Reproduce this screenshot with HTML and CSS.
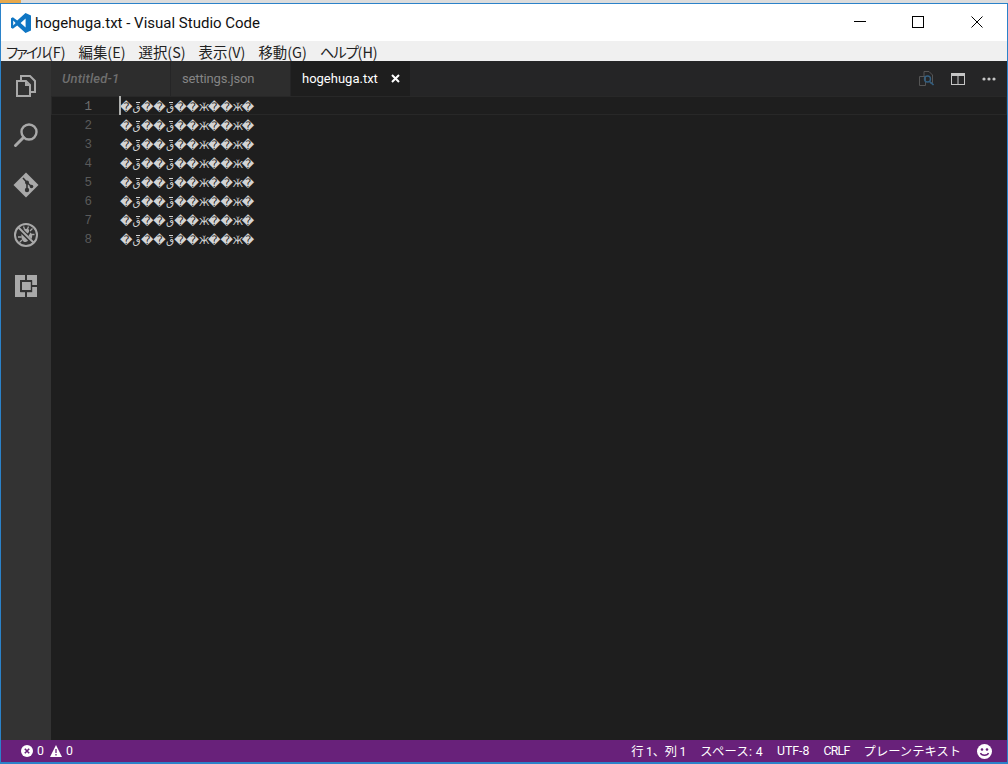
FILE: index.html
```html
<!DOCTYPE html>
<html lang="ja">
<head>
<meta charset="utf-8">
<title>hogehuga.txt - Visual Studio Code</title>
<link rel="stylesheet" href="styles.css">
</head>
<body>
<div class="desktop-strip"><div class="taskbar-accent"></div></div>
<div class="window">
  <header class="titlebar">
    <svg class="logo" width="22" height="22" viewBox="0 0 22 22"><path fill="#0f76c4" d="M15.5 1 21 3.4v15.2L15.5 21 7.2 13.4 2.9 16.8 1 15.8V6.2l1.9-1 4.3 3.4zM15.600 6.600 10.600 11l5 4.400zM3.200 8.600v4.800L5.600 11z"/></svg>
    <span class="title">hogehuga.txt - Visual Studio Code</span>
    <div class="win-controls">
      <span class="win-btn min"><svg width="12" height="12" viewBox="0 0 12 12"><path d="M0 5.500h12" stroke="#000" fill="none"/></svg></span>
      <span class="win-btn"><svg width="12" height="12" viewBox="0 0 12 12"><rect x=".5" y=".5" width="11" height="11" stroke="#000" fill="none"/></svg></span>
      <span class="win-btn"><svg width="12" height="12" viewBox="0 0 12 12"><path d="M.5.5l11 11M11.500.5l-11 11" stroke="#000" fill="none"/></svg></span>
    </div>
  </header>
  <nav class="menubar">
    <span><span class="kana-a">ファイル</span>(F)</span><span>編集(E)</span><span>選択(S)</span><span>表示(V)</span><span>移動(G)</span><span><span class="kana-b">ヘルプ</span>(H)</span>
  </nav>
  <div class="workbench">
    <aside class="activity">
      <svg width="24" height="24" viewBox="0 0 24 24"><g fill="none" stroke="#a9a9a9" stroke-width="2"><path d="M3 7h9l4 4v11H3z"/><path d="M7 6V2h9l5 5v11h-4"/><path d="M12 7v4h4"/></g></svg>
      <svg width="26" height="26" viewBox="0 0 26 26"><circle cx="16" cy="10" r="7.500" fill="none" stroke="#a9a9a9" stroke-width="2.400"/><path d="M10.500 15.500 2.500 23.500" stroke="#a9a9a9" stroke-width="3" stroke-linecap="round"/></svg>
      <svg width="26" height="26" viewBox="0 0 26 26"><path fill="#a9a9a9" d="M13 .5 25.500 13 13 25.500.5 13z"/><path d="M10 6l4 4.500M14 10.500v7M14 10.500l4.500 4" stroke="#333" stroke-width="1.600" fill="none"/><circle cx="14" cy="10.500" r="2" fill="#333"/><circle cx="14" cy="18" r="2.200" fill="#333"/><circle cx="18.500" cy="14.500" r="1.800" fill="#333"/></svg>
      <svg width="26" height="26" viewBox="0 0 26 26"><circle cx="13" cy="13" r="11" fill="none" stroke="#a9a9a9" stroke-width="2"/><path d="M5.500 5.500l15 15" stroke="#a9a9a9" stroke-width="2"/><path fill="#a9a9a9" d="M8.500 12l6.500 6.500c-1 1.500-3 2-4.500 1-1.500-1-2.500-4.500-2-7.500zM10.500 7.500c1.500-1 4-1 5.500 0v2.500l-1.500 1.500zM17.500 10.500l1.500 1.500c.5 1.500.2 3.500-.5 5l-3-3z"/><path d="M19.500 6.500 17 9M21.500 12.500H19M5 15h3.500M6.500 20.500 9 18M10.500 4.500 11.500 7M15.500 4.500 14.500 7" stroke="#a9a9a9" stroke-width="1.300"/></svg>
      <svg class="ext" width="24" height="24" viewBox="0 0 24 24"><path fill="#a9a9a9" fill-rule="evenodd" d="M1 1h10v5H6v12h5v5H1zM13 1h10v10h-5V6h-5zM18 13h5v10H13v-5h5z"/><path fill="#a9a9a9" d="M8 8h10v8H8z"/><rect x="7" y="7" width="10.500" height="10.500" fill="none" stroke="#333" stroke-width="1.400"/></svg>
    </aside>
    <main class="main">
      <div class="tabs">
        <div class="tab italic">Untitled-1</div>
        <div class="tab settings">settings.json</div>
        <div class="tab active">hogehuga.txt<svg class="tab-close" width="9" height="9" viewBox="0 0 9 9"><path d="M1 1l7 7M8 1 1 8" stroke="#fff" stroke-width="2"/></svg></div>
        <div class="tab-actions">
          <svg width="15" height="15" viewBox="0 0 15 15"><g fill="none"><path d="M5 5V.5h5l3.500 3.500v8H11M.5 5.500h6v9h-6z" stroke="#555" stroke-width="1"/><circle cx="8.500" cy="8" r="3" stroke="#335f80" stroke-width="1.400"/><path d="M10.500 10.500l4 3.500" stroke="#335f80" stroke-width="1.600"/></g></svg>
          <svg width="14" height="12" viewBox="0 0 14 12"><path fill="#c5c5c5" fill-rule="evenodd" d="M0 0h14v12H0zM1 3v8h5.500V3zM7.500 3v8H13V3z"/></svg>
          <svg width="14" height="4" viewBox="0 0 14 4"><g fill="#c5c5c5"><circle cx="2" cy="2" r="1.600"/><circle cx="7" cy="2" r="1.600"/><circle cx="12" cy="2" r="1.600"/></g></svg>
        </div>
      </div>
      <div class="editor">
        <div class="line current"><span class="cursor"></span><span class="num">1</span><span class="code">�<span class="q">ق</span>��<span class="q">ق</span>��<span class="zh">Ӂ</span>��<span class="zh">Ӂ</span>�</span></div>
        <div class="line"><span class="num">2</span><span class="code">�<span class="q">ق</span>��<span class="q">ق</span>��<span class="zh">Ӂ</span>��<span class="zh">Ӂ</span>�</span></div>
        <div class="line"><span class="num">3</span><span class="code">�<span class="q">ق</span>��<span class="q">ق</span>��<span class="zh">Ӂ</span>��<span class="zh">Ӂ</span>�</span></div>
        <div class="line"><span class="num">4</span><span class="code">�<span class="q">ق</span>��<span class="q">ق</span>��<span class="zh">Ӂ</span>��<span class="zh">Ӂ</span>�</span></div>
        <div class="line"><span class="num">5</span><span class="code">�<span class="q">ق</span>��<span class="q">ق</span>��<span class="zh">Ӂ</span>��<span class="zh">Ӂ</span>�</span></div>
        <div class="line"><span class="num">6</span><span class="code">�<span class="q">ق</span>��<span class="q">ق</span>��<span class="zh">Ӂ</span>��<span class="zh">Ӂ</span>�</span></div>
        <div class="line"><span class="num">7</span><span class="code">�<span class="q">ق</span>��<span class="q">ق</span>��<span class="zh">Ӂ</span>��<span class="zh">Ӂ</span>�</span></div>
        <div class="line"><span class="num">8</span><span class="code">�<span class="q">ق</span>��<span class="q">ق</span>��<span class="zh">Ӂ</span>��<span class="zh">Ӂ</span>�</span></div>
      </div>
    </main>
  </div>
  <footer class="statusbar">
    <div class="status-left">
      <svg width="12" height="12" viewBox="0 0 12 12"><circle cx="6" cy="6" r="6" fill="#fff"/><path d="M3.800 3.800l4.400 4.400M8.200 3.800 3.800 8.200" stroke="#68217a" stroke-width="1.600"/></svg>
      <span class="count">0</span>
      <svg width="12" height="12" viewBox="0 0 12 12"><path d="M6 0 12 12H0z" fill="#fff"/><path d="M6 4v4M6 9v1.500" stroke="#68217a" stroke-width="1.300"/></svg>
      <span class="count">0</span>
    </div>
    <div class="status-right">
      <span class="pos">行 1、列 1</span><span class="spaces">スペース: 4</span><span>UTF-8</span><span class="crlf">CRLF</span><span>プレーンテキスト</span>
      <svg class="smile" width="15" height="15" viewBox="0 0 15 15"><circle cx="7.500" cy="7.500" r="7.500" fill="#fff"/><circle cx="5" cy="5.500" r="1.300" fill="#68217a"/><circle cx="10" cy="5.500" r="1.300" fill="#68217a"/><path d="M3.500 9c1 3 7 3 8 0" stroke="#68217a" stroke-width="1.300" fill="none"/></svg>
    </div>
  </footer>
</div>
</body>
</html>
```
FILE: styles.css
```css
* { box-sizing: border-box; }
html, body { margin: 0; padding: 0; height: 100%; overflow: hidden; }
body {
  display: flex;
  flex-direction: column;
  background: #fff;
  font-family: "Roboto", "Noto Sans CJK JP", sans-serif;
}
.desktop-strip { height: 3px; background: #dcdcdc; flex: none; }
.taskbar-accent { width: 21px; height: 3px; background: #e8a94c; }
.window {
  flex: 1;
  min-height: 0;
  display: flex;
  flex-direction: column;
  border: 1px solid #2b82c9;
  border-bottom-width: 2px;
}
.titlebar {
  height: 37px;
  flex: none;
  display: flex;
  align-items: center;
  background: #fff;
  padding-left: 9px;
}
.logo { margin-right: 3px; }
.title {
  font-family: "Roboto", sans-serif;
  font-size: 15px;
  color: #111;
  white-space: nowrap;
}
.win-controls { margin-left: auto; display: flex; align-self: stretch; padding: 0 1px 1px 0; }
.win-btn { width: 59px; display: flex; align-items: center; justify-content: center; }
.win-btn.min svg { margin-left: 2px; }
.menubar {
  height: 20px;
  flex: none;
  display: flex;
  gap: 13px;
  align-items: center;
  padding-left: 5px;
  background: #f0f0f0;
  font-family: "Noto Sans CJK JP", sans-serif;
  font-feature-settings: "palt";
  font-size: 14.400px;
  color: #222;
  white-space: nowrap;
}
.kana-a { letter-spacing: -2px; }
.kana-b { letter-spacing: -1.200px; }
.workbench { flex: 1; min-height: 0; display: flex; }
.activity {
  width: 50px;
  flex: none;
  background: #333;
  display: flex;
  flex-direction: column;
  align-items: center;
  padding-top: 13px;
  gap: 24px;
}
.activity .ext { margin-top: 2px; }
.main { flex: 1; min-width: 0; display: flex; flex-direction: column; background: #1e1e1e; }
.tabs { height: 35px; flex: none; display: flex; background: #252526; }
.tab {
  width: 120px;
  display: flex;
  align-items: center;
  padding-left: 11px;
  background: #2d2d2d;
  border-right: 1px solid #252526;
  font-family: "Roboto", sans-serif;
  font-size: 13px;
  color: #858585;
  white-space: nowrap;
}
.tab.italic { font-style: italic; font-weight: 500; color: #6f6f6f; letter-spacing: .2px; }
.tab.settings { letter-spacing: -.15px; }
.tab.active { background: #1e1e1e; color: #fff; width: 119px; border-right: 0; }
.tab-close { margin-left: 13px; }
.tab-actions { margin-left: auto; display: flex; align-items: center; gap: 17px; padding-right: 11px; }
.editor { flex: 1; min-height: 0; }
.line {
  position: relative;
  height: 19px;
  display: flex;
  align-items: center;
  padding-top: 2px;
  color: #d4d4d4;
  font-family: "DejaVu Sans", "Noto Sans", sans-serif;
  font-size: 12.100px;
  white-space: nowrap;
}
.line.current { box-shadow: inset 0 0 0 1px #282828; }
.num {
  width: 41px;
  text-align: right;
  color: #5a5a5a;
  font-size: 12.500px;
  font-family: "Liberation Mono", monospace;
  flex: none;
}
.line.current .num { color: #6e6e6e; }
.code { margin-left: 28px; }
.q, .zh { display: inline-block; text-align: center; }
.q { position: relative; width: 8.500px; font-size: 10.500px; }
.q::after {
  content: "";
  position: absolute;
  right: 1px;
  top: 1px;
  width: 4px;
  height: 1px;
  background: #d4d4d4;
}
.zh { width: 9px; font-size: 9.500px; }
.cursor {
  position: absolute;
  left: 68px;
  top: 0;
  width: 2px;
  height: 19px;
  background: #aeafad;
}
.statusbar {
  height: 22px;
  flex: none;
  display: flex;
  justify-content: space-between;
  align-items: center;
  background: #68217a;
  color: #fff;
  font-size: 12.300px;
  font-family: "Roboto", "Noto Sans CJK JP", sans-serif;
  padding: 0 15px 0 20px;
  white-space: nowrap;
}
.status-left, .status-right { display: flex; align-items: center; }
.status-left svg + .count { margin-left: 4px; margin-right: 6px; }
.status-right { gap: 14px; }
.pos { letter-spacing: -.25px; }
.spaces { letter-spacing: .3px; }
.crlf { letter-spacing: -.7px; }
.smile { margin-left: 2px; }
```
